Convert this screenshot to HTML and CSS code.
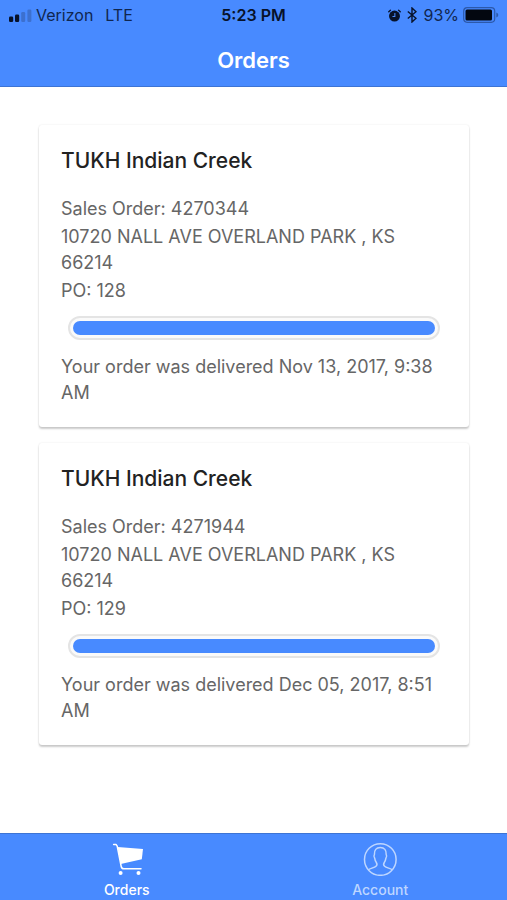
FILE: index.html
```html
<!DOCTYPE html>
<html lang="en">
<head>
<meta charset="utf-8">
<meta name="viewport" content="width=device-width, initial-scale=1">
<title>Orders</title>
<link rel="stylesheet" href="styles.css">
</head>
<body>
<header class="top">
  <div class="status">
    <div class="status-side">
      <svg class="signal" width="24" height="13" viewBox="0 0 24 13" aria-hidden="true">
        <rect x="1" y="7.500" width="4.200" height="5.500" rx="1.300" fill="#07122a"/>
        <rect x="7" y="5.500" width="4.200" height="7.500" rx="1.300" fill="#07122a"/>
        <rect x="13.200" y="3" width="4" height="10" rx="1.300" fill="#3c70cf"/>
        <rect x="19.400" y="0.500" width="4" height="12.500" rx="1.300" fill="#3c70cf"/>
      </svg>
      <span class="carrier">Verizon</span>
      <span>LTE</span>
    </div>
    <time class="clock">5:23 PM</time>
    <div class="status-side status-end">
      <svg width="13" height="13" viewBox="0 0 14 14" aria-hidden="true">
        <circle cx="7" cy="7.6" r="5.9" fill="#07122a"/>
        <path d="M.8 3 2.600 1.300M13.200 3 11.400 1.300" stroke="#07122a" stroke-width="1.4" stroke-linecap="round"/>
        <path d="M7.400 4.300v3.700H4.800" fill="none" stroke="#4a8bfd" stroke-width="1.1"/>
      </svg>
      <svg class="bluetooth" width="10" height="16" viewBox="0 0 10 16" aria-hidden="true">
        <path d="M.8 4.5 9 11.3 5 15V1l4 3.7L.8 11.5" fill="none" stroke="#07122a" stroke-width="1.4"/>
      </svg>
      <span>93%</span>
      <svg class="battery" width="36" height="16" viewBox="0 0 36 16" aria-hidden="true">
        <rect x=".7" y=".7" width="31" height="14.6" rx="3.5" fill="none" stroke="#2c59ab" stroke-width="1.2"/>
        <rect x="2.5" y="2.5" width="26.5" height="11" rx="1.5" fill="#030710"/>
        <path d="M33.3 5.5q2 .8 2 2.5t-2 2.500z" fill="#2c59ab"/>
      </svg>
    </div>
  </div>
  <h1 class="title">Orders</h1>
</header>
<main class="orders">
  <article class="card">
    <h2 class="card-title">TUKH Indian Creek</h2>
    <p class="line">Sales Order: 4270344</p>
    <p class="line">10720 NALL AVE OVERLAND PARK , KS 66214</p>
    <p class="line">PO: 128</p>
    <progress class="bar" value="100" max="100" aria-label="Delivery progress"></progress>
    <p class="line">Your order was delivered Nov 13, 2017, 9:38 AM</p>
  </article>
  <article class="card">
    <h2 class="card-title">TUKH Indian Creek</h2>
    <p class="line">Sales Order: 4271944</p>
    <p class="line">10720 NALL AVE OVERLAND PARK , KS 66214</p>
    <p class="line">PO: 129</p>
    <progress class="bar" value="100" max="100" aria-label="Delivery progress"></progress>
    <p class="line">Your order was delivered Dec 05, 2017, 8:51 AM</p>
  </article>
</main>
<nav class="tabs">
  <a class="tab tab-active" href="#orders">
    <svg width="34" height="34" viewBox="0 0 34 34" aria-hidden="true">
      <path d="M7.600 5 33 7 31.800 17.300 10.800 22z" fill="currentColor"/>
      <path d="M3.600 2.400h2.400l1.200 1.800L11.200 24.500q.5 2.300 2.600 2.300H31" fill="none" stroke="currentColor" stroke-width="1.500" stroke-linecap="round" stroke-linejoin="round"/>
      <circle cx="10.600" cy="31" r="2" fill="currentColor"/>
      <circle cx="28.500" cy="31" r="2" fill="currentColor"/>
    </svg>
    <span>Orders</span>
  </a>
  <a class="tab" href="#account">
    <svg width="34" height="34" viewBox="0 0 34 34" aria-hidden="true">
      <g fill="none" stroke="currentColor" stroke-width="1.5" stroke-linejoin="round">
        <circle cx="17.300" cy="17.500" r="15.800"/>
        <path d="M5.500 27.700c1.200-1.200 6-2 7.500-3.400 1.300-1.200.9-3.100.2-4.100-1-1.200-1.300-2.400-1.500-4-.7-1-1-2.700-.3-3.600-.3-4.600 1.800-7 5.900-7s6.200 2.400 5.900 7c.7.9.4 2.600-.3 3.600-.2 1.600-.5 2.800-1.500 4-.7 1-1.100 2.900.2 4.100 1.500 1.400 6.300 2.200 7.500 3.400"/>
      </g>
    </svg>
    <span>Account</span>
  </a>
</nav>
</body>
</html>
```
FILE: styles.css
```css
* {
  box-sizing: border-box;
}

body {
  margin: 0;
  min-height: 100vh;
  display: flex;
  flex-direction: column;
  background: #fff;
  color: #666;
  font-family: Inter, "Liberation Sans", sans-serif;
}

.top {
  height: 87px;
  background: #488aff;
  border-bottom: 1px solid #3d74d4;
}

.status {
  display: grid;
  grid-template-columns: 1fr auto 1fr;
  align-items: center;
  height: 30px;
  padding: 0 8px;
  color: #10264f;
  font-size: 16px;
}

.status-side {
  display: flex;
  align-items: center;
}

.status-end {
  justify-content: flex-end;
}

.signal {
  margin-right: 4px;
}

.carrier {
  margin-right: 12px;
}

.clock {
  color: #07122a;
  font-weight: 600;
}

.bluetooth {
  margin: 0 6px;
}

.battery {
  margin-left: 4px;
}

.title {
  margin: 16px 0 0;
  color: #fff;
  font-size: 22px;
  font-weight: 600;
  line-height: 28px;
  text-align: center;
}

.orders {
  flex: 1;
  display: flex;
  flex-direction: column;
  gap: 16px;
  padding: 38px 38px 16px 39px;
}

.card {
  padding: 24px 22px 21px;
  border-radius: 3px;
  background: #fff;
  box-shadow: 0 2px 2px rgba(0, 0, 0, 0.2), 0 0 2px rgba(0, 0, 0, 0.1);
}

.card-title {
  margin: 0 0 23px;
  color: #222;
  font-size: 21px;
  font-weight: 500;
  line-height: 24px;
}

.line {
  margin: 0 0 2px;
  font-size: 18px;
  line-height: 26px;
}

.line:last-child {
  margin-bottom: 0;
}

.bar {
  appearance: none;
  -webkit-appearance: none;
  display: block;
  width: calc(100% - 14px);
  height: 24px;
  margin: 12px 7px 14px;
  padding: 3px;
  border: 2px solid #e4e4e4;
  border-radius: 12px;
  background: #fafafa;
}

.bar::-webkit-progress-bar {
  border-radius: 7px;
  background: transparent;
}

.bar::-webkit-progress-value {
  border-radius: 7px;
  background: #488aff;
}

.tabs {
  display: flex;
  height: 67px;
  border-top: 1px solid #3d74d4;
  background: #488aff;
}

.tab {
  flex: 1;
  display: flex;
  flex-direction: column;
  align-items: center;
  gap: 6px;
  padding-top: 8px;
  color: #bed6ff;
  font-size: 14px;
  font-weight: 500;
  line-height: 16px;
  text-decoration: none;
}

.tab-active {
  color: #fff;
}
```
